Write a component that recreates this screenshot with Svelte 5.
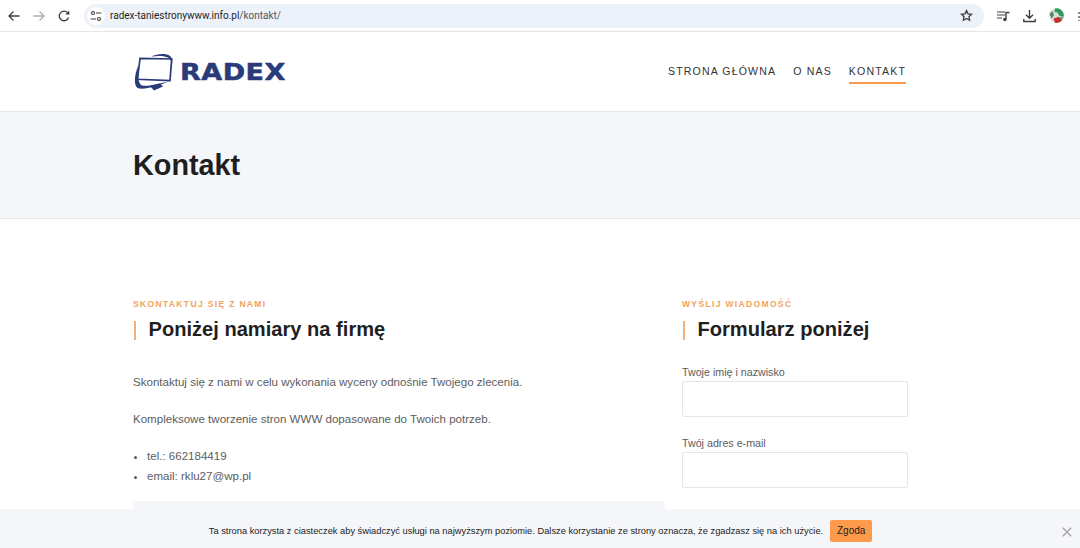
<script>
	const contacts = ["tel.: 662184419", "email: rklu27@wp.pl"];
	const fields = [
		{ id: "name", label: "Twoje imię i nazwisko" },
		{ id: "mail", label: "Twój adres e-mail" }
	];
</script>

<div class="page">
	<div class="toolbar">
		<svg class="tb" width="14" height="14" viewBox="0 0 14 14"><path d="M12.5 7H2M6.5 2.500 2 7l4.500 4.500" fill="none" stroke="#3c4043" stroke-width="1.300"/></svg>
		<svg class="tb" width="14" height="14" viewBox="0 0 14 14"><path d="M1.500 7H12M7.500 2.500 12 7l-4.500 4.500" fill="none" stroke="#a9acb0" stroke-width="1.300"/></svg>
		<svg class="tb" width="14" height="14" viewBox="0 0 14 14"><path d="M11.600 8.500A4.800 4.800 0 1 1 10.500 3.600L12 5" fill="none" stroke="#3c4043" stroke-width="1.300"/><path d="M12.300 1.500v4h-4" fill="#3c4043"/></svg>
		<div class="omnibox">
			<span class="tune">
				<svg width="12" height="12" viewBox="0 0 12 12"><g fill="none" stroke="#3c4043" stroke-width="1.100"><circle cx="3" cy="3" r="1.500"/><path d="M6 3h5.500M.5 9H6"/><circle cx="9" cy="9" r="1.500"/></g></svg>
			</span>
			<span class="url">radex-taniestronywww.info.pl<span class="path">/kontakt/</span></span>
			<svg class="star" width="13" height="13" viewBox="0 0 24 24"><path d="m12 3 2.800 6 6.500.8-4.800 4.400 1.300 6.500L12 17.400l-5.800 3.300 1.300-6.500L2.700 9.800 9.200 9z" fill="none" stroke="#3c4043" stroke-width="2.400"/></svg>
		</div>
		<div class="actions">
			<svg width="13" height="12" viewBox="0 0 13 12"><path d="M0 2h8M0 5h8M0 8h5" stroke="#3c4043" stroke-width="1.200"/><path d="M9 9.500V2.500h3.500" fill="none" stroke="#3c4043" stroke-width="1.400"/><circle cx="7.800" cy="9.500" r="1.700" fill="#3c4043"/></svg>
			<svg width="13" height="14" viewBox="0 0 13 14"><path d="M6.500 1v8M3 5.800l3.500 3.500L10 5.800M.8 10v2.500h11.400V10" fill="none" stroke="#3c4043" stroke-width="1.400"/></svg>
			<svg width="15" height="15" viewBox="0 0 15 15"><circle cx="7.500" cy="7.500" r="7.300" fill="#d9dfd8"/><path d="M6 .4a7.300 7.300 0 0 1 8.700 8.400L10.500 8 8.500 4.500 5.500 4z" fill="#2f9a5c"/><path d="M.5 6 3.500 3 5 7.500 2.500 10.500z" fill="#4b8a5f"/><path d="M4.500 10.500 10 8.800l3.200 3.400A7.300 7.300 0 0 1 6 14.700z" fill="#c4322d"/><path d="M11 9l3.300.6-1.200 2.500z" fill="#2f9a5c"/></svg>
			<span class="dots"></span>
		</div>
	</div>

	<header class="site-head">
		<div class="container head-row">
			<a class="logo" href="#top">
				<svg width="42" height="42" viewBox="0 0 42 42">
					<path d="M7 7.300 38.700 8 37 29.700 4.500 28.300z" fill="none" stroke="#2b3a78" stroke-width="1.700"/>
					<path d="M18 5.500C25 2.500 33 2 37 5c3.500 3 2.500 8 .5 13 1-5 1-9-1.500-11-4-2.500-11-2.500-18-1.500z" fill="#2b3a78"/>
					<path d="M5 15C1.500 24 .5 34 4.500 37c6 2.500 20-2 33.500-7.500-11 3-23 6.500-29 5-3.500-1.500-4.500-9-4-19.500z" fill="#2b3a78"/>
					<path d="M17 35l10-2.500 3 3-9 4z" fill="#2b3a78"/>
				</svg>
				<span class="logo-text">RADEX</span>
			</a>
			<nav>
				<a href="#top">STRONA GŁÓWNA</a>
				<a href="#top">O NAS</a>
				<a href="#top" class="current">KONTAKT</a>
			</nav>
		</div>
	</header>

	<section class="title-band">
		<div class="container"><h1>Kontakt</h1></div>
	</section>

	<main class="container columns">
		<div class="left">
			<p class="eyebrow">SKONTAKTUJ SIĘ Z NAMI</p>
			<h2>Poniżej namiary na firmę</h2>
			<p class="copy first">Skontaktuj się z nami w celu wykonania wyceny odnośnie Twojego zlecenia.</p>
			<p class="copy">Kompleksowe tworzenie stron WWW dopasowane do Twoich potrzeb.</p>
			<ul>
				{#each contacts as item}
					<li>{item}</li>
				{/each}
			</ul>
			<div class="box"></div>
		</div>
		<div class="right">
			<p class="eyebrow">WYŚLIJ WIADOMOŚĆ</p>
			<h2>Formularz poniżej</h2>
			<form>
				{#each fields as f}
					<label for={f.id}>{f.label}</label>
					<input id={f.id} type="text" />
				{/each}
			</form>
		</div>
	</main>

	<div class="cookie">
		<span>Ta strona korzysta z ciasteczek aby świadczyć usługi na najwyższym poziomie. Dalsze korzystanie ze strony oznacza, że zgadzasz się na ich użycie.</span>
		<button type="button">Zgoda</button>
		<svg class="close" width="10" height="10" viewBox="0 0 10 10"><path d="M.8.8l8.400 8.400M9.200.8.800 9.200" stroke="#a8a8a8" stroke-width="1.500"/></svg>
	</div>
</div>

<style>
	:global(body) {
		margin: 0;
		background: #fff;
		overflow: hidden;
	}

	.page {
		height: 548px;
		overflow: hidden;
		font-family: "Liberation Sans", Arial, sans-serif;
		color: #5c5c5c;
	}

	.toolbar {
		height: 31px;
		border-bottom: 1px solid #e6e6e6;
		display: flex;
		align-items: center;
		padding-left: 7px;
	}

	.tb {
		margin-right: 11px;
		flex: none;
	}

	.omnibox {
		margin-left: 2px;
		width: 900px;
		height: 24px;
		border-radius: 12px;
		background: #edf2fa;
		display: flex;
		align-items: center;
		flex: none;
	}

	.tune {
		width: 18px;
		height: 18px;
		margin-left: 3px;
		border-radius: 50%;
		background: #fff;
		display: flex;
		align-items: center;
		justify-content: center;
	}

	.url {
		margin-left: 5px;
		font-family: Roboto, sans-serif;
		font-size: 10px;
		color: #1f1f1f;
		flex: 1;
	}

	.path {
		color: #555;
	}

	.star {
		margin-right: 11px;
	}

	.actions {
		display: flex;
		align-items: center;
		gap: 13px;
		margin-left: 13px;
	}

	.dots {
		width: 2px;
		height: 10px;
		background: radial-gradient(circle, #888 1px, transparent 1px) 0 0 / 2px 4px;
		margin-left: 1px;
	}

	.container {
		width: 775px;
		margin-left: 133px;
	}

	.site-head {
		height: 79px;
		border-bottom: 1px solid #e6e6e6;
	}

	.head-row {
		display: flex;
		justify-content: space-between;
		align-items: center;
		height: 79px;
	}

	.logo {
		display: flex;
		align-items: center;
		gap: 5px;
		text-decoration: none;
	}

	.logo-text {
		font-family: "DejaVu Sans", sans-serif;
		font-weight: 700;
		font-size: 23.5px;
		line-height: 24px;
		letter-spacing: 0.4px;
		color: #2b3a78;
		-webkit-text-stroke: 0.5px #2b3a78;
		transform: scaleX(1.15);
		transform-origin: left center;
		width: 104px;
	}

	nav {
		display: flex;
		gap: 17px;
		margin-right: 2px;
	}

	nav a {
		font-size: 10.6px;
		letter-spacing: 1.13px;
		color: #333;
		text-decoration: none;
		padding: 4px 0 4px;
		border-bottom: 2px solid transparent;
		line-height: 13px;
		margin-top: 1px;
	}

	nav a.current {
		border-bottom-color: #f79a4b;
	}

	.title-band {
		height: 106px;
		background: #f5f6fa;
		border-bottom: 1px solid #e6e6e6;
		display: flex;
		align-items: center;
	}

	h1 {
		margin: 0;
		font-size: 28.8px;
		line-height: 34px;
		color: #1f1f1f;
	}

	.columns {
		display: grid;
		grid-template-columns: 532px 226px;
		column-gap: 17px;
		padding-top: 79px;
	}

	.eyebrow {
		margin: 0;
		font-size: 8.5px;
		line-height: 12px;
		font-weight: 700;
		letter-spacing: 1.35px;
		color: #f3a25b;
	}

	h2 {
		margin: 9px 0 0;
		font-size: 20.1px;
		line-height: 20px;
		color: #1f1f1f;
		display: flex;
		align-items: center;
		gap: 12.5px;
		height: 20px;
	}

	h2::before {
		content: "";
		width: 2px;
		height: 19px;
		margin: 2px 0 0 1px;
		background: #f3b07a;
	}

	.copy {
		margin: 0 0 21px;
		font-size: 11.55px;
		line-height: 16px;
	}

	.copy.first {
		margin-top: 35px;
	}

	ul {
		margin: -2px 0 0;
		padding-left: 14px;
		font-size: 11.55px;
		line-height: 20px;
	}

	.box {
		margin-top: 15px;
		height: 40px;
		background: #f5f6fa;
	}

	form {
		margin-top: 26px;
		display: flex;
		flex-direction: column;
	}

	label {
		font-size: 10.7px;
		line-height: 14px;
		margin-bottom: 2px;
	}

	input {
		height: 36px;
		box-sizing: border-box;
		border: 1px solid #e6e6e6;
		border-radius: 2px;
		margin-bottom: 19px;
		background: #fff;
		padding: 0;
	}

	.cookie {
		position: fixed;
		left: 0;
		right: 0;
		bottom: 0;
		height: 39px;
		background: #f5f6fa;
		display: flex;
		align-items: center;
		justify-content: center;
		gap: 7px;
		font-size: 9.3px;
		color: #222;
		padding: 4px 0 0 1px;
		box-sizing: border-box;
	}

	button {
		width: 42px;
		height: 22px;
		padding: 0;
		border: none;
		border-radius: 2px;
		background: #fd9a4b;
		font: inherit;
		font-size: 10px;
		color: #222;
	}

	.close {
		position: absolute;
		right: 8px;
		top: 18px;
	}
</style>
